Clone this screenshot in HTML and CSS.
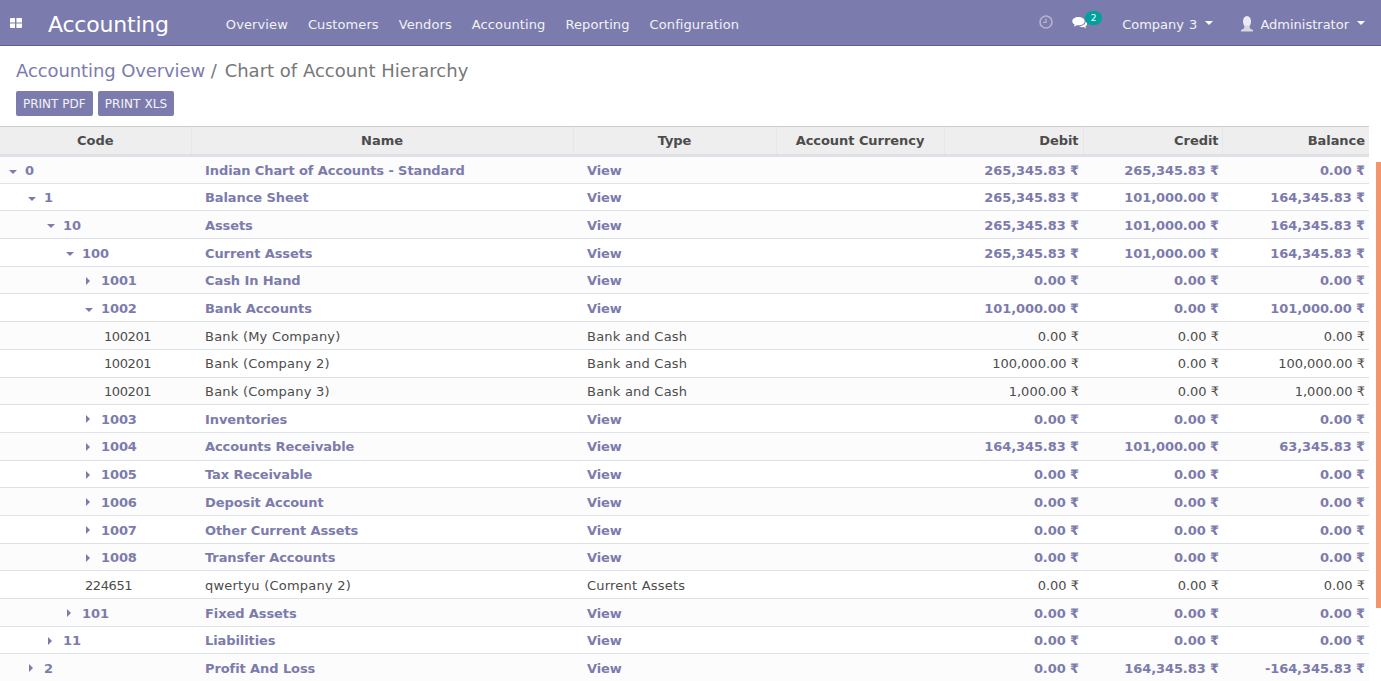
FILE: index.html
```html
<!DOCTYPE html>
<html lang="en">
<head>
<meta charset="utf-8">
<title>Chart of Account Hierarchy</title>
<link rel="stylesheet" href="styles.css">
</head>
<body>
<header class="navbar">
  <svg class="apps" width="12" height="10" viewBox="0 0 12 10"><path d="M0 1a1 1 0 0 1 1-1h4v4.4H0zM6.4 0H11a1 1 0 0 1 1 1v3.4H6.4zM0 5.6h5V10H1a1 1 0 0 1-1-1zM6.4 5.6H12V9a1 1 0 0 1-1 1H6.4z" fill="#fff"/></svg>
  <span class="brand">Accounting</span>
  <nav class="menu">
    <a>Overview</a><a>Customers</a><a>Vendors</a><a>Accounting</a><a>Reporting</a><a>Configuration</a>
  </nav>
  <div class="systray">
    <svg class="clock" width="14" height="14" viewBox="0 0 14 14"><circle cx="7" cy="7" r="6" fill="none" stroke="#b5b4d0" stroke-width="1.6"/><path d="M7 3.4V7.4H4" fill="none" stroke="#b5b4d0" stroke-width="1.3"/></svg>
    <span class="chat">
      <svg width="16" height="14" viewBox="0 0 16 14"><path d="M6.5 1C3 1 .3 2.9.3 5.2c0 1.4 1 2.600 2.400 3.400L2 10.700l2.800-1.500c.5.100 1.100.1 1.700.1 3.500 0 6.200-1.800 6.200-4.100S10 1 6.500 1z" fill="#fff"/><path d="M13.500 4.600c.1.300.1.500.1.800 0 2.600-2.800 4.700-6.500 4.800 1 .7 2.300 1 3.700 1 .4 0 .8 0 1.100-.1l2 1.300-.5-1.800c1-.7 1.700-1.700 1.700-2.800 0-.9-.6-1.700-1.600-2.200z" fill="#fff"/></svg>
      <span class="badge">2</span>
    </span>
    <a class="drop company">Company 3<i class="tri"></i></a>
    <a class="drop admin">
      <svg width="14" height="18" viewBox="0 0 14 18"><ellipse cx="7" cy="6.500" rx="4" ry="5.500" fill="#eceaf3"/><path d="M4.500 10.500h5l.5 3 3 1.500v1.500H1V15l3-1.500z" fill="#d8d6e6"/></svg>
      <span>Administrator</span><i class="tri"></i></a>
  </div>
</header>

<section class="control">
  <h1 class="crumbs"><a>Accounting Overview</a> <span class="sep">/</span> <span>Chart of Account Hierarchy</span></h1>
  <div class="buttons"><button>PRINT PDF</button><button>PRINT XLS</button></div>
</section>

<table class="coa">
  <colgroup><col class="c1"><col class="c2"><col class="c3"><col class="c4"><col class="c5"><col class="c6"><col class="c7"></colgroup>
  <thead>
    <tr><th class="mid">Code</th><th class="mid">Name</th><th class="mid">Type</th><th class="mid">Account Currency</th><th>Debit</th><th>Credit</th><th>Balance</th></tr>
  </thead>
  <tbody>
    <tr class="group"><td class="l0"><i class="open"></i>0</td><td>Indian Chart of Accounts - Standard</td><td>View</td><td></td><td>265,345.83 ₹</td><td>265,345.83 ₹</td><td>0.00 ₹</td></tr>
    <tr class="group"><td class="l1"><i class="open"></i>1</td><td>Balance Sheet</td><td>View</td><td></td><td>265,345.83 ₹</td><td>101,000.00 ₹</td><td>164,345.83 ₹</td></tr>
    <tr class="group"><td class="l2"><i class="open"></i>10</td><td>Assets</td><td>View</td><td></td><td>265,345.83 ₹</td><td>101,000.00 ₹</td><td>164,345.83 ₹</td></tr>
    <tr class="group"><td class="l3"><i class="open"></i>100</td><td>Current Assets</td><td>View</td><td></td><td>265,345.83 ₹</td><td>101,000.00 ₹</td><td>164,345.83 ₹</td></tr>
    <tr class="group"><td class="l4"><i class="closed"></i>1001</td><td>Cash In Hand</td><td>View</td><td></td><td>0.00 ₹</td><td>0.00 ₹</td><td>0.00 ₹</td></tr>
    <tr class="group"><td class="l4"><i class="open"></i>1002</td><td>Bank Accounts</td><td>View</td><td></td><td>101,000.00 ₹</td><td>0.00 ₹</td><td>101,000.00 ₹</td></tr>
    <tr><td class="leaf5">100201</td><td>Bank (My Company)</td><td>Bank and Cash</td><td></td><td>0.00 ₹</td><td>0.00 ₹</td><td>0.00 ₹</td></tr>
    <tr><td class="leaf5">100201</td><td>Bank (Company 2)</td><td>Bank and Cash</td><td></td><td>100,000.00 ₹</td><td>0.00 ₹</td><td>100,000.00 ₹</td></tr>
    <tr><td class="leaf5">100201</td><td>Bank (Company 3)</td><td>Bank and Cash</td><td></td><td>1,000.00 ₹</td><td>0.00 ₹</td><td>1,000.00 ₹</td></tr>
    <tr class="group"><td class="l4"><i class="closed"></i>1003</td><td>Inventories</td><td>View</td><td></td><td>0.00 ₹</td><td>0.00 ₹</td><td>0.00 ₹</td></tr>
    <tr class="group"><td class="l4"><i class="closed"></i>1004</td><td>Accounts Receivable</td><td>View</td><td></td><td>164,345.83 ₹</td><td>101,000.00 ₹</td><td>63,345.83 ₹</td></tr>
    <tr class="group"><td class="l4"><i class="closed"></i>1005</td><td>Tax Receivable</td><td>View</td><td></td><td>0.00 ₹</td><td>0.00 ₹</td><td>0.00 ₹</td></tr>
    <tr class="group"><td class="l4"><i class="closed"></i>1006</td><td>Deposit Account</td><td>View</td><td></td><td>0.00 ₹</td><td>0.00 ₹</td><td>0.00 ₹</td></tr>
    <tr class="group"><td class="l4"><i class="closed"></i>1007</td><td>Other Current Assets</td><td>View</td><td></td><td>0.00 ₹</td><td>0.00 ₹</td><td>0.00 ₹</td></tr>
    <tr class="group"><td class="l4"><i class="closed"></i>1008</td><td>Transfer Accounts</td><td>View</td><td></td><td>0.00 ₹</td><td>0.00 ₹</td><td>0.00 ₹</td></tr>
    <tr><td class="leaf4">224651</td><td>qwertyu (Company 2)</td><td>Current Assets</td><td></td><td>0.00 ₹</td><td>0.00 ₹</td><td>0.00 ₹</td></tr>
    <tr class="group"><td class="l3"><i class="closed"></i>101</td><td>Fixed Assets</td><td>View</td><td></td><td>0.00 ₹</td><td>0.00 ₹</td><td>0.00 ₹</td></tr>
    <tr class="group"><td class="l2"><i class="closed"></i>11</td><td>Liabilities</td><td>View</td><td></td><td>0.00 ₹</td><td>0.00 ₹</td><td>0.00 ₹</td></tr>
    <tr class="group"><td class="l1"><i class="closed"></i>2</td><td>Profit And Loss</td><td>View</td><td></td><td>0.00 ₹</td><td>164,345.83 ₹</td><td>-164,345.83 ₹</td></tr>
  </tbody>
</table>
<div class="scrollmark"></div>
</body>
</html>
```
FILE: styles.css
```css
* { box-sizing: border-box; }
html, body { height: 100%; }
body {
  margin: 0;
  overflow: hidden;
  background: #fff;
  color: #4c4c4c;
  font-family: "DejaVu Sans", sans-serif;
  font-size: 13px;
  line-height: 18.57px;
  text-rendering: optimizeSpeed;
}
.navbar {
  height: 46px;
  display: flex;
  align-items: center;
  background: #7c7bad;
  border-bottom: 1px solid #5f5e97;
  color: #fff;
}
.apps { margin-left: 10px; flex: none; }
.brand { margin-left: 26px; padding-top: 4px; font-size: 22px; line-height: 30px; letter-spacing: -0.2px; }
.menu { display: flex; margin-left: 57px; padding-top: 5px; gap: 20px; color: #f2f2f7; letter-spacing: 0.1px; }
.systray { margin-left: auto; display: flex; align-items: center; color: #f2f2f7; }
.clock { margin: -2px 19px 0 0; }
.chat { position: relative; display: flex; margin-right: 36px; }
.badge {
  position: absolute;
  left: 13px;
  top: -5px;
  width: 17px;
  height: 14px;
  border-radius: 7px;
  background: #00a09d;
  color: #fff;
  font-size: 9px;
  line-height: 14px;
  text-align: center;
}
.drop { display: flex; align-items: center; padding-top: 5px; }
.company { margin-right: 27px; word-spacing: 1px; margin-left: -2px; }
.company .tri { margin-top: -5px; }
.admin { margin-right: 16px; gap: 6px; }
.admin svg { margin-top: -3px; }
.tri {
  width: 0;
  height: 0;
  margin-left: 8px;
  border: 4px solid transparent;
  border-top-color: #fff;
  border-bottom: 0;
}
.admin .tri { margin: -5px 0 0 2px; }
.control { padding: 12px 16px 10px; }
.crumbs { margin: 0; font-size: 18px; font-weight: 400; line-height: 25px; color: #777; }
.crumbs a { color: #7c7bad; letter-spacing: -0.1px; }
.sep { margin: 0 2px 0 0; }
.buttons { display: flex; gap: 5px; margin-top: 8px; }
.buttons button {
  height: 25px;
  padding: 0 7px;
  border: 0;
  border-radius: 2px;
  background: #7c7bad;
  color: #f4f4f8;
  font: 12px "DejaVu Sans", sans-serif;
}
.buttons button:last-child { letter-spacing: 0.1px; }
.coa { width: 1369px; table-layout: fixed; border-collapse: collapse; }
.c1 { width: 191px; } .c2 { width: 382px; } .c3 { width: 203px; } .c4 { width: 168px; }
.c5 { width: 139px; } .c6 { width: 139px; } .c7 { width: 147px; }
.coa th {
  height: 29px;
  padding: 1px 4px 0;
  background: #eee;
  border-top: 1px solid #ccc;
  border-left: 1px solid #e6e6e6;
  border-bottom: 3px solid #dee2e6;
  font-weight: 700;
  text-align: right;
  letter-spacing: -0.05px;
}
.coa th:first-child { border-left: 0; }
.coa th.mid { text-align: center; }
.coa td {
  height: 27.7px;
  padding: 3.1px 4px 0 14px;
  border-bottom: 1px solid #dee2e6;
  white-space: nowrap;
  letter-spacing: 0.22px;
}
.coa td:nth-child(n+5) { padding-left: 4px; text-align: right; letter-spacing: 0; }
.coa td:nth-child(6), .coa th:nth-child(6) { padding-right: 3px; }
.coa tbody tr:nth-child(odd) { background: #fcfcfc; }
.group td { font-weight: 700; color: #7c7bad; }
.coa .group td { letter-spacing: -0.09px; }
.coa td.l0 { padding-left: 9px; }
.coa td.l1 { padding-left: 28px; }
.coa td.l2 { padding-left: 47px; }
.coa td.l3 { padding-left: 66px; }
.coa td.l4 { padding-left: 85px; }
.coa td.leaf4 { padding-left: 85px; letter-spacing: -0.4px; }
.coa td.leaf5 { padding-left: 104px; letter-spacing: -0.4px; }
.open, .closed { display: inline-block; vertical-align: middle; }
.open { width: 8px; height: 0; margin-right: 8px; border: 4px solid transparent; border-top-color: #7c7bad; border-bottom: 0; }
.closed { width: 4px; height: 8px; margin: -2px 11px 0 1px; border: 4px solid transparent; border-left-color: #7c7bad; border-right: 0; }
.scrollmark {
  position: absolute;
  right: 0;
  top: 162px;
  width: 5px;
  height: 446px;
  background: #f4966b;
}
```
